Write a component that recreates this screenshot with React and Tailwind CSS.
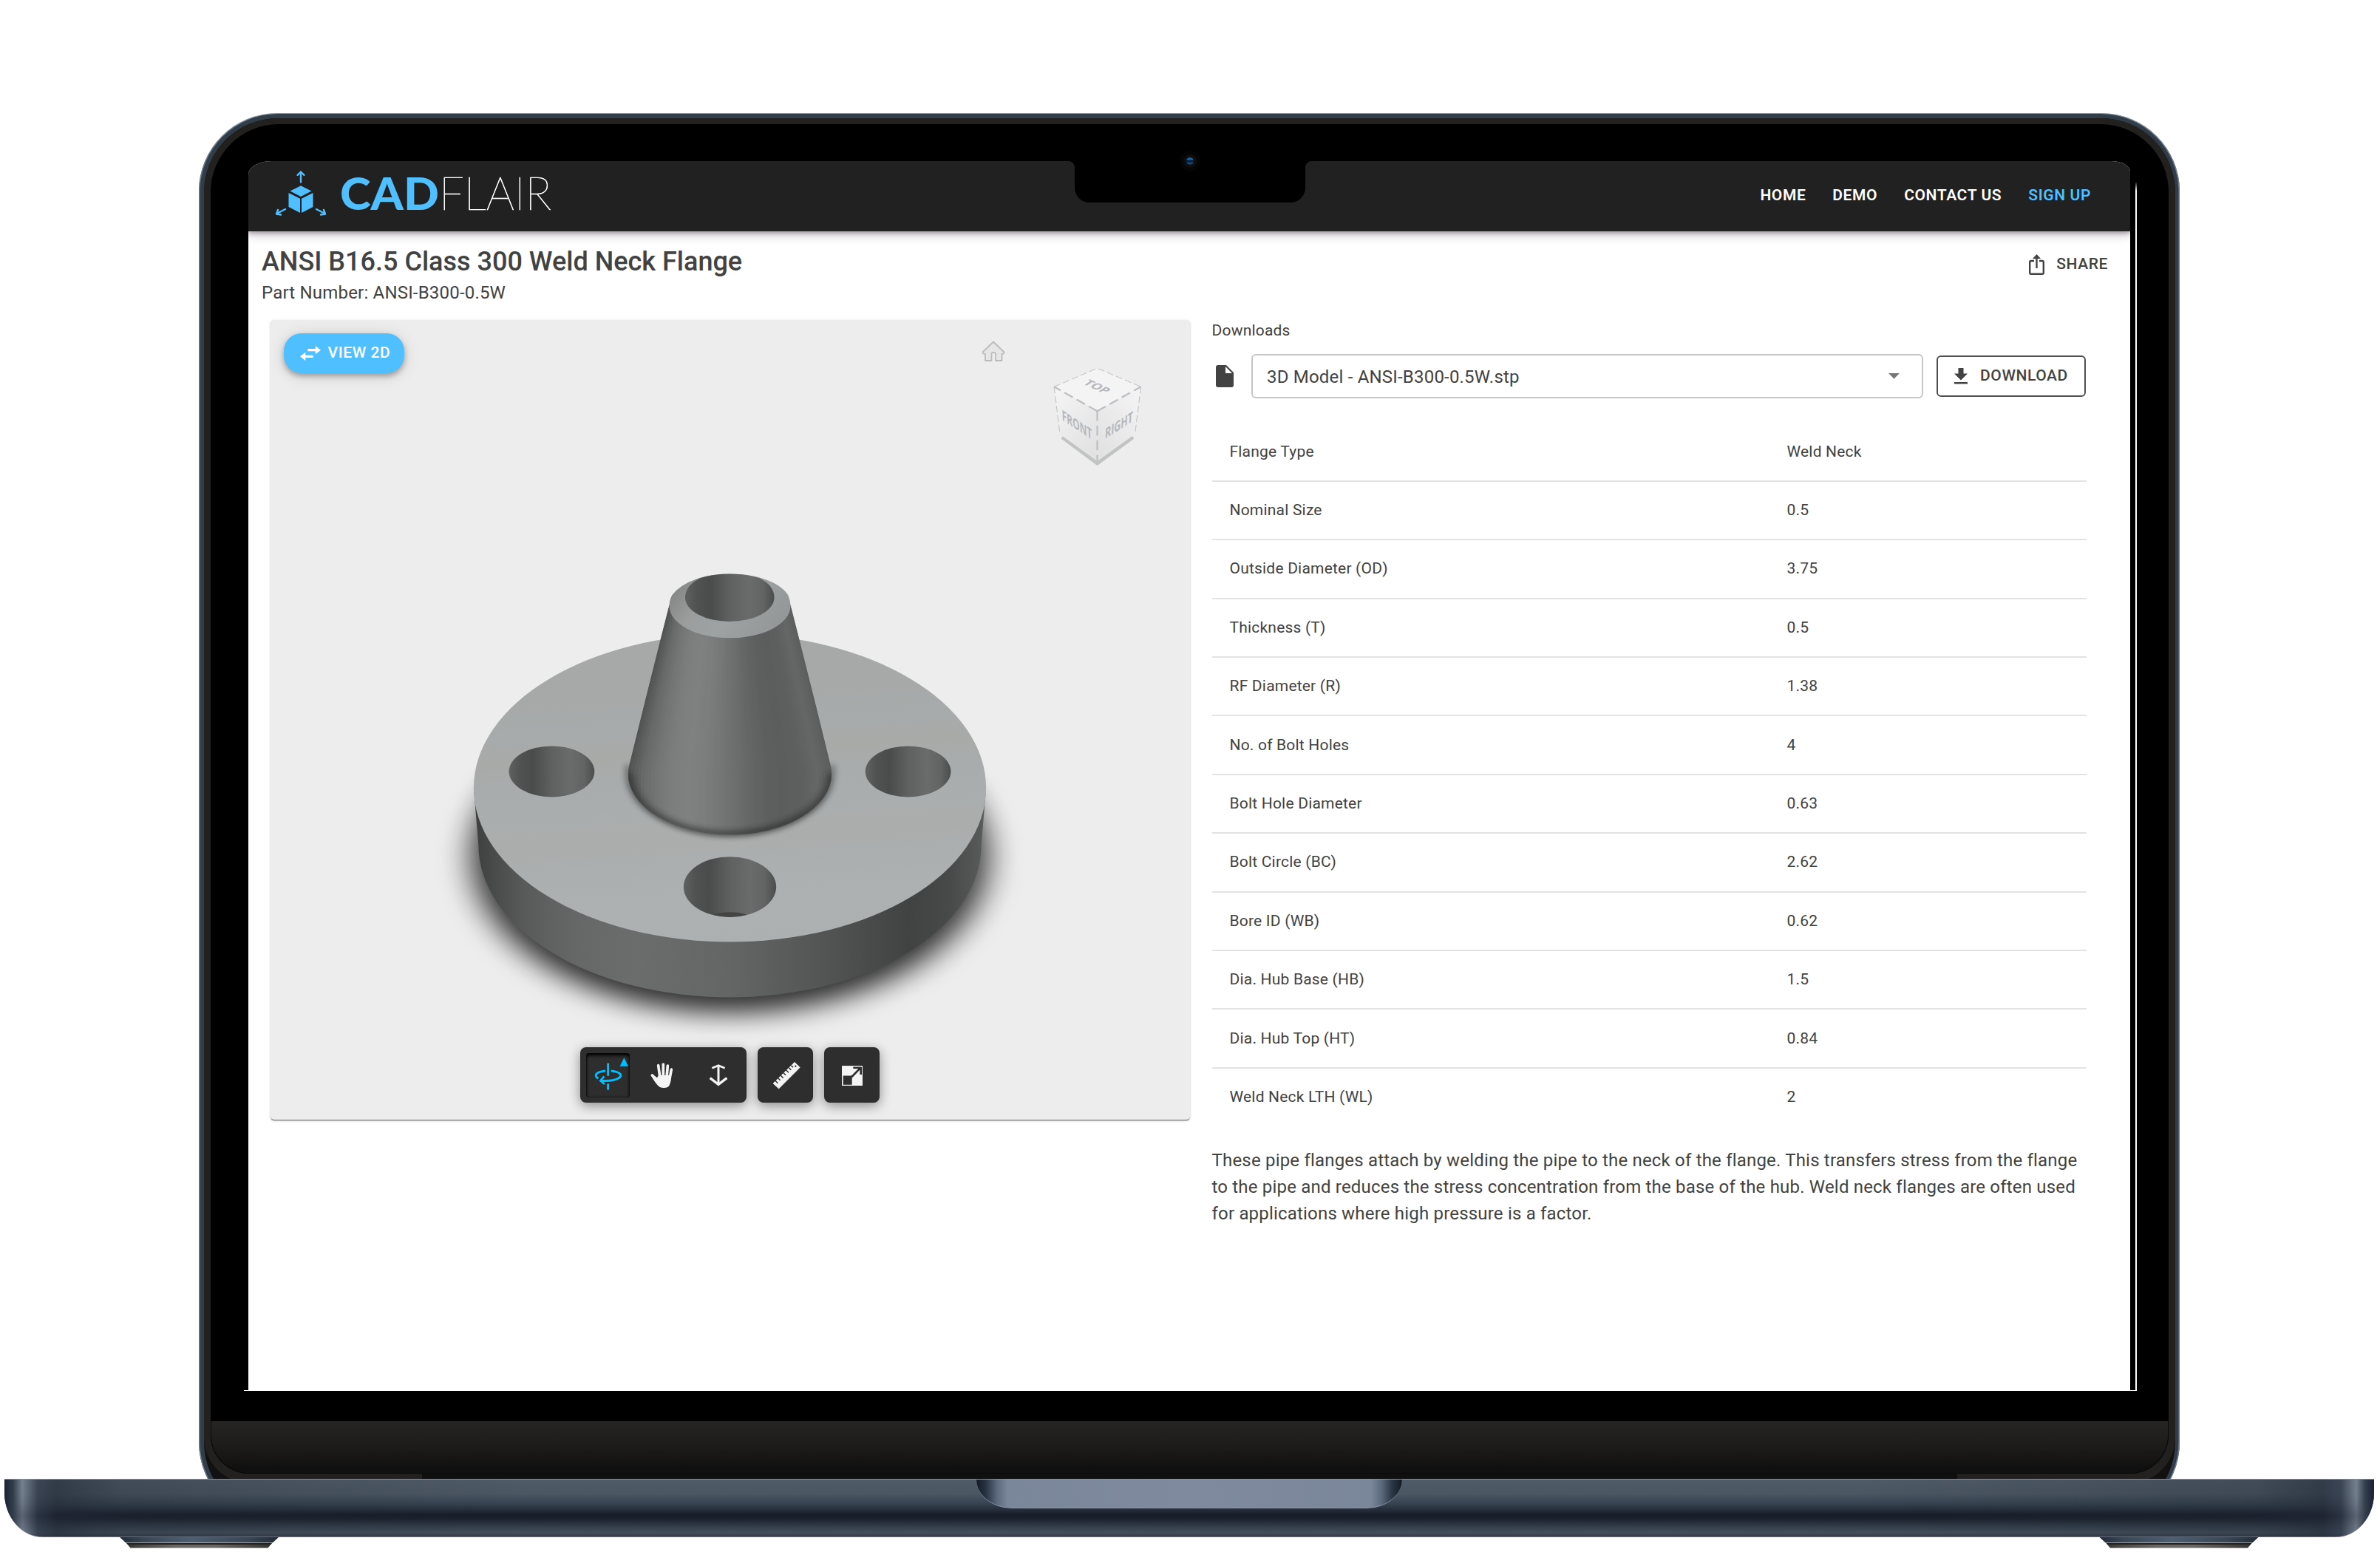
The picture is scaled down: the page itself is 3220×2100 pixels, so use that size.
const specs = [
  ["Flange Type", "Weld Neck"],
  ["Nominal Size", "0.5"],
  ["Outside Diameter (OD)", "3.75"],
  ["Thickness (T)", "0.5"],
  ["RF Diameter (R)", "1.38"],
  ["No. of Bolt Holes", "4"],
  ["Bolt Hole Diameter", "0.63"],
  ["Bolt Circle (BC)", "2.62"],
  ["Bore ID (WB)", "0.62"],
  ["Dia. Hub Base (HB)", "1.5"],
  ["Dia. Hub Top (HT)", "0.84"],
  ["Weld Neck LTH (WL)", "2"],
];

function Logo() {
  return (
    <svg viewBox="366 218 390 84" className="h-[84px] w-[390px] overflow-visible">
      <g fill="none" stroke="#50bfff" strokeWidth="2.4" strokeLinecap="round" strokeLinejoin="round">
        <path d="M407 245.500V231.500M402.600 235.800L407 231.500L411.400 235.800" />
        <path d="M386 282L374.500 288M376 283L374 288.500L380 289.500" />
        <path d="M428 282L439.500 288M438 283L440 288.500L434 289.500" />
      </g>
      <g fill="#50bfff">
        <path d="M407 250.300L421.500 257.600L407 264.900L392.500 257.600Z" />
        <path d="M390.500 260L406 267.800V287L390.500 279Z" />
        <path d="M423.500 260L408 267.800V287L423.500 279Z" />
      </g>
      <text x="460" y="282.500" textLength="134" lengthAdjust="spacingAndGlyphs" fontFamily="Lato" fontWeight="900" fontSize="61" fill="#50bfff">CAD</text>
      <text x="594" y="282.500" textLength="152" lengthAdjust="spacingAndGlyphs" fontFamily="Lato" fontWeight="100" fontSize="61.500" fill="#fff" stroke="#fff" strokeWidth=".7">FLAIR</text>
    </svg>
  );
}

const coneShades = [
  [80, 83, 82], [103, 106, 105], [117, 119, 118], [125, 127, 126], [127, 129, 128], [123, 125, 124], [116, 118, 117],
  [106, 109, 108], [98, 101, 100], [92, 95, 94], [91, 94, 93], [93, 96, 95], [101, 103, 102], [91, 94, 93],
];

/* Tapered strips that shade the hub along its length. */
const coneStrips = Array.from({ length: 60 }, (_, i) => {
  const a = i / 60;
  const b = Math.min(1, (i + 1) / 60 + 0.008);
  const t = ((i + 0.5) / 60) * 13;
  const k = Math.floor(t);
  const [r, g, bl] = coneShades[k].map((v, c) => Math.round(v + (coneShades[k + 1][c] - v) * (t - k)));
  return {
    d: `M${645 + 306 * a} 185L${538 + 520 * a} 725V950H${538 + 520 * b}V725L${645 + 306 * b} 185Z`,
    fill: `rgb(${r},${g},${bl})`,
  };
});

function Flange() {
  return (
    <svg viewBox="0 0 1568 1568" preserveAspectRatio="none" className="absolute top-[307px] left-[194px] h-[660px] w-[840px] overflow-visible">
      <defs>
        <linearGradient id="side">
          <stop offset="0" stopColor="#3c3f3e" /><stop offset=".03" stopColor="#454847" /><stop offset=".1" stopColor="#585b5a" /><stop offset=".2" stopColor="#666867" />
          <stop offset=".32" stopColor="#6b6d6c" /><stop offset=".5" stopColor="#636665" /><stop offset=".68" stopColor="#525554" />
          <stop offset=".85" stopColor="#404341" /><stop offset=".93" stopColor="#474a49" /><stop offset="1" stopColor="#5a5d5c" />
        </linearGradient>
        <linearGradient id="face" x1="0.400" y1="0" x2="0.500" y2="1">
          <stop offset="0" stopColor="#a6a9a8" /><stop offset=".2" stopColor="#a6a9a8" /><stop offset=".3" stopColor="#a7abab" />
          <stop offset=".38" stopColor="#a8aaa8" /><stop offset=".48" stopColor="#a8acad" /><stop offset=".6" stopColor="#abaeae" /><stop offset=".66" stopColor="#abadac" />
          <stop offset=".76" stopColor="#abafb0" /><stop offset=".88" stopColor="#aeb1b1" /><stop offset="1" stopColor="#adb0b0" />
        </linearGradient>
        <linearGradient id="bore">
          <stop offset="0" stopColor="#5e6160" /><stop offset=".13" stopColor="#4f5251" /><stop offset=".28" stopColor="#494c4b" />
          <stop offset=".5" stopColor="#5e6160" /><stop offset=".72" stopColor="#696c6b" /><stop offset=".88" stopColor="#616463" /><stop offset="1" stopColor="#4a4d4c" />
        </linearGradient>
        <linearGradient id="rim" x1="0" x2="1" y1=".1" y2=".5">
          <stop offset="0" stopColor="#7d807f" /><stop offset=".35" stopColor="#9c9e9e" /><stop offset=".6" stopColor="#9ea2a3" /><stop offset="1" stopColor="#959898" />
        </linearGradient>
        <filter id="soft" x="-30%" y="-30%" width="160%" height="160%"><feGaussianBlur stdDeviation="42 40" /></filter>
        <filter id="soft2" x="-30%" y="-60%" width="160%" height="220%"><feGaussianBlur stdDeviation="9" /></filter>
        <clipPath id="coneClip"><path d="M645 185L622 296L544 700Q541 715 541 730A257 196 0 0 0 1055 730Q1055 715 1051 695L975 296L951 185Z" /></clipPath>
        <clipPath id="hole"><ellipse cx="798" cy="1093" rx="117" ry="97" /></clipPath>
      </defs>
      <ellipse cx="798" cy="1000" rx="660" ry="510" fill="#000" opacity=".36" filter="url(#soft)" />
      <ellipse cx="798" cy="990" rx="632" ry="488" fill="#000" opacity=".75" filter="url(#soft)" />
      <path d="M151 775L163 958A635 490 0 0 0 1433 958L1445 775Z" fill="url(#side)" />
      <ellipse cx="798" cy="775" rx="647" ry="495" fill="url(#face)" />
      <ellipse cx="348" cy="722" rx="108" ry="82" fill="url(#bore)" />
      <ellipse cx="1248" cy="722" rx="108" ry="82" fill="url(#bore)" />
      <ellipse cx="798" cy="1093" rx="117" ry="97" fill="url(#bore)" />
      <ellipse cx="798" cy="1210" rx="66" ry="36" fill="#444443" clipPath="url(#hole)" />
      <path d="M541 700A257 204 0 0 0 1055 700L1055 730A257 198 0 0 1 541 730Z" fill="#000" stroke="#000" strokeWidth="10" opacity=".5" filter="url(#soft2)" />
      <g clipPath="url(#coneClip)">
        {coneStrips.map((s) => <path key={s.d} d={s.d} fill={s.fill} />)}
        <path d="M541 726A257 196 0 0 0 1055 726" fill="none" stroke="#1c1e1d" strokeWidth="20" opacity=".5" filter="url(#soft2)" />
      </g>
      <path d="M645 190Q645 172 652 155Q672 122 712 104Q750 87 798 87Q850 87 886 104Q928 122 945 155Q951 172 951 190A153 103 0 0 1 645 190Z" fill="url(#rim)" />
      <path d="M685 163Q685 125 722 101Q755 87 798 87Q842 87 874 101Q910 125 910 163A112.500 77 0 0 1 685 163Z" fill="url(#bore)" />
    </svg>
  );
}

function ViewCube() {
  return (
    <svg viewBox="1420 490 130 146" className="absolute top-[57px] left-[1054px] h-[146px] w-[130px] overflow-visible">
      <defs>
        <linearGradient id="cubeL" x1="0" y1="0" x2=".7" y2="1"><stop offset="0" stopColor="#f5f5f5" /><stop offset="1" stopColor="#e2e2e2" /></linearGradient>
        <linearGradient id="cubeR" x1="1" y1="0" x2=".3" y2="1"><stop offset="0" stopColor="#f5f5f5" /><stop offset="1" stopColor="#e2e2e2" /></linearGradient>
      </defs>
      <path d="M1437 591.500L1484.500 626.800L1533 591.500" fill="none" stroke="#c2c3c3" strokeWidth="5" />
      <path d="M1484.500 498.300L1543.600 523.300L1484.500 556.300L1426.200 523.300Z" fill="#f4f4f4" />
      <path d="M1426.200 523.300L1484.500 556.300V624L1434 587.500Z" fill="url(#cubeL)" />
      <path d="M1543.600 523.300L1484.500 556.300V624L1535.500 587.500Z" fill="url(#cubeR)" />
      <g fill="none" stroke="#bcbfc1" strokeWidth="2.200">
        <path d="M1484.500 556.300L1426.200 523.300M1484.500 556.300L1543.600 523.300" strokeDasharray="13 6" />
        <path d="M1484.500 556.300V624" strokeDasharray="13.500 6.200" />
        <path d="M1426.200 523.300L1484.500 498.300L1543.600 523.300M1426.200 523.300L1434 587.500M1543.600 523.300L1535.500 587.500" strokeWidth="1" strokeDasharray="9 4" />
      </g>
      <g fill="#b5b8bb" fontFamily="Open Sans" fontWeight="700" textAnchor="middle">
        <text transform="matrix(.87 .4 -.75 .5 1484.500 523)" y="6.500" fontSize="17.500">TOP</text>
        <text transform="matrix(.85 .56 .05 1 1457 574.500)" y="7" fontSize="19.500" textLength="48" lengthAdjust="spacingAndGlyphs">FRONT</text>
        <text transform="matrix(.82 -.52 -.05 1 1514 575)" y="7" fontSize="19.500" textLength="46" lengthAdjust="spacingAndGlyphs">RIGHT</text>
      </g>
    </svg>
  );
}

const tool = "rounded-[8px] bg-[#2e2e2e] shadow-[0_4px_16px_rgba(0,0,0,0.42)] h-[75px] flex";

function Toolbar() {
  return (
    <div className="absolute top-[983.500px] left-[419.300px] flex gap-[15px]">
      <div className={tool + " w-[225px]"}>
        <div className="m-[8px] h-[60px] w-[59px] rounded-[4px] shadow-[inset_0_3px_4px_#000,inset_0_0_3px_rgba(0,0,0,0.7)]">
          <svg viewBox="99 102 177 180" className="h-[60px] w-[59px]">
            <g fill="none" stroke="#00bfff" strokeWidth="9">
              <path d="M188 143V194" /><path d="M188 226V251" />
              <path d="M148 205C128 192 140 178 177 174" />
              <path d="M200 174C238 178 250 192 230 204C218 211 195 216 160 214" />
              <path d="M172 196L157 214L174 228" strokeWidth="8" />
            </g>
            <path d="M236 155L253 121L270 155Z" fill="#00bfff" />
          </svg>
        </div>
        <svg viewBox="340 135 150 120" className="mt-[18.500px] ml-[13px] h-[40px] w-[50px]">
          <g stroke="#f4f4f4" strokeLinecap="round" strokeWidth="11" fill="none">
            <path d="M393 155L400 205" /><path d="M413 150V205" /><path d="M431 156L427 205" /><path d="M446 171L438 215" /><path d="M368 195L390 217" />
          </g>
          <path d="M394 195H441L444 212Q442 232 433 242Q416 250 399 243Q388 236 374 214L366 200L372 193L388 205Z" fill="#f4f4f4" />
        </svg>
        <svg viewBox="577 135 120 120" className="mt-[18.500px] ml-[29px] h-[40px] w-[40px]">
          <g fill="none" stroke="#f4f4f4" strokeWidth="10">
            <path d="M637 153V232" strokeWidth="9" /><path d="M611 166L637 155L663 166" strokeWidth="8" /><path d="M603 206L637 232L671 206" />
          </g>
        </svg>
      </div>
      <div className={tool + " w-[75px] items-center justify-center"}>
        <svg viewBox="850 137 126 116" className="mt-[2px] ml-[2px] h-[38.700px] w-[42px]">
          <path d="M859 227L946 141L968 162L882 248Z" fill="#f4f4f4" strokeLinejoin="round" stroke="#f4f4f4" strokeWidth="2" />
          <g stroke="#2e2e2e" strokeWidth="4.500">
            <path d="M868 216L878 226M879 205L888 214M890 195L900 205M901 184L910 193M912 173L922 183M923 163L932 172M932 154L940 162" />
          </g>
          <circle cx="950" cy="157" r="3.500" fill="#2e2e2e" />
        </svg>
      </div>
      <div className={tool + " w-[75px] items-center justify-center"}>
        <svg viewBox="1134 156 84 82" className="mt-[3px] h-[27.500px] w-[28px]">
          <path d="M1134 156H1218V238H1134Z" fill="#f4f4f4" />
          <path d="M1141 198H1173V231H1141Z" fill="#2e2e2e" stroke="#2e2e2e" strokeWidth="4" />
          <path d="M1172 203L1208 166M1180 164H1211M1211 161V192" stroke="#2e2e2e" strokeWidth="8" fill="none" />
        </svg>
      </div>
    </div>
  );
}

function Viewer() {
  return (
    <div className="relative h-[1081.500px] w-[1244px] rounded-[5px] bg-[#ededed] shadow-[0_2px_1px_-1px_rgba(0,0,0,0.35),0_1.500px_1.500px_rgba(0,0,0,0.2),0_1px_4px_rgba(0,0,0,0.12)]">
      <div className="absolute inset-0 overflow-hidden rounded-[5px]">
        <Flange />
      </div>
      <button className="absolute top-[17.500px] left-[18px] flex h-[54px] w-[163px] items-center rounded-[24px] bg-[#50bfff] pl-[22px] shadow-[0_4px_7px_rgba(0,0,0,0.28),0_3px_22px_rgba(0,0,0,0.14)]">
        <svg viewBox="0 0 54 60" preserveAspectRatio="none" className="h-[20px] w-[28px] fill-white">
          <path d="M20 12H40V0L54 17L40 34V22H20ZM34 38H14V26L0 43L14 60V48H34Z" />
        </svg>
        <span className="ml-[9.500px] pb-[2px] text-[21px] leading-[36px] font-medium tracking-[0.600px] text-white">VIEW 2D</span>
      </button>
      <svg viewBox="0 0 32 29" className="absolute top-[28px] left-[961.500px] h-[29px] w-[32px]" fill="#e6e6e6" stroke="#bbb" strokeWidth="1.800" strokeLinejoin="round">
        <path d="M16 1.500L30.500 15.500Q31 18 27.500 18V27H19V17Q16 14.500 13.500 17V27H5V18Q1 18 1.500 15.500Z" />
      </svg>
      <ViewCube />
      <Toolbar />
    </div>
  );
}

function Screen() {
  return (
    <div className="flex h-[1664px] w-[2546px] shrink-0 flex-col overflow-hidden rounded-tl-[32px_18px] rounded-tr-[26px_14px] bg-white text-[#424242]">
      <header className="relative z-10 flex h-[95px] shrink-0 items-center justify-between bg-[#212121] pr-[53px] pl-[30px] shadow-[0_3px_6px_rgba(40,20,40,0.35),0_6px_14px_rgba(40,20,40,0.16)]">
        <div className="pb-[10px]"><Logo /></div>
        <nav className="flex gap-[36px] pb-[3px] text-[21px] leading-[36px] font-semibold tracking-[0.600px] text-white">
          <span>HOME</span><span>DEMO</span><span>CONTACT US</span><span className="text-[#50bfff]">SIGN UP</span>
        </nav>
      </header>
      <div className="flex justify-between pt-[20px] pr-[30px] pl-[18px]">
        <div>
          <h1 className="w-fit text-[36px] leading-[43px] font-medium">ANSI B16.5 Class 300 Weld Neck Flange</h1>
          <p className="mt-[2px] w-fit text-[24px] leading-[36px] tracking-[0.190px]">Part Number: ANSI-B300-0.5W</p>
        </div>
        <div className="mt-[6px] flex h-[36px] items-start">
          <svg viewBox="0 0 21 28" className="mt-[5px] h-[28px] w-[21px]" fill="none" stroke="#424242" strokeWidth="2.400">
            <path d="M7 9H3Q1.200 9 1.200 11V25Q1.200 26.800 3 26.800H18Q19.800 26.800 19.800 25V11Q19.800 9 18 9H14" />
            <path d="M10.500 19V3" /><path d="M10.500 0L16 6H5Z" fill="#424242" stroke="none" />
          </svg>
          <span className="ml-[16px] text-[21px] leading-[36px] font-medium tracking-[0.600px]">SHARE</span>
        </div>
      </div>
      <div className="flex gap-[29.500px] pt-[19px] pl-[30px]">
        <Viewer />
        <section className="w-[1183px]">
          <p className="w-fit text-[21px] leading-[28px] tracking-[0.200px]">Downloads</p>
          <div className="mt-[18px] flex h-[60px] items-center">
            <svg viewBox="0 0 24 30" className="ml-[5.500px] h-[30px] w-[24px] shrink-0 fill-[#424242]">
              <path d="M3 0H14L24 10V27Q24 30 21 30H3Q0 30 0 27V3Q0 0 3 0ZM13 2V11H22Z" fillRule="evenodd" />
            </svg>
            <div className="ml-[24px] flex h-[60px] w-[908.500px] items-center justify-between rounded-[6px] border-2 border-[#c6c6c6] pr-[30px] pl-[19px]">
              <span className="pt-[2px] text-[24px] leading-[36px] tracking-[0.200px]">3D Model - ANSI-B300-0.5W.stp</span>
              <svg viewBox="0 0 15 7.500" className="h-[7.500px] w-[15px] fill-[#757575]"><path d="M0 0H15L7.500 7.500Z" /></svg>
            </div>
            <button className="ml-[18.500px] flex h-[56px] w-[202px] items-center rounded-[6px] border-2 border-[#505050] pl-[22px]">
              <svg viewBox="0 0 18 21.500" className="h-[21.500px] w-[18px] fill-[#424242]"><path d="M5.500 0H12.500V7.500H18L9 16.500L0 7.500H5.500ZM0 19H18V21.500H0Z" /></svg>
              <span className="ml-[17px] pb-[3px] text-[21px] leading-[36px] font-medium tracking-[0.600px]">DOWNLOAD</span>
            </button>
          </div>
          <div className="mt-[33.500px]">
            {specs.map(([name, value]) => (
              <div key={name} className="grid h-[79.400px] grid-cols-[754px_1fr] items-center border-b-2 border-[#e3e3e3] pb-[1px] pl-[24px] text-[21px] leading-[30px] tracking-[0.200px] last:border-transparent">
                <span>{name}</span>
                <span>{value}</span>
              </div>
            ))}
          </div>
          <p className="mt-[26.500px] text-[24px] leading-[36px] tracking-[0.190px] whitespace-nowrap">
            These pipe flanges attach by welding the pipe to the neck of the flange. This transfers stress from the flange<br />
            to the pipe and reduces the stress concentration from the base of the hub. Weld neck flanges are often used<br />
            for applications where high pressure is a factor.
          </p>
        </section>
      </div>
    </div>
  );
}

function Notch() {
  return (
    <div className="absolute top-[50px] left-[1161.500px] z-20 flex h-[56px] w-[328px]">
      <div className="size-[8px] bg-[radial-gradient(circle_at_0_100%,transparent_7.500px,black_8px)]" />
      <div className="flex-1 rounded-b-[20px] bg-black" />
      <div className="size-[8px] bg-[radial-gradient(circle_at_100%_100%,transparent_7.500px,black_8px)]" />
      <div className="absolute -top-[14px] left-[149.500px] flex size-[28px] items-center justify-center rounded-full bg-[#050505]">
        <div className="flex size-[18px] items-center justify-center rounded-full bg-[#0e0e0f]">
          <div className="size-[10px] rounded-full bg-[linear-gradient(#16508c_0%,#1d66ad_25%,#071d38_45%,#071d38_58%,#15508c_78%,#0c2c50_100%)]" />
        </div>
      </div>
    </div>
  );
}

function Lid() {
  return (
    <div className="ml-[268.500px] h-[1848px] w-[2680px] overflow-hidden">
      <div className="h-[1908px] rounded-t-[106px] rounded-b-[110px] border-t border-[#8c98a2] bg-[#323d4a] p-[6px] pl-[7px] shadow-[inset_1.500px_0_0_#6d7a88,inset_-1.500px_0_0_#6d7a88]">
        <div className="h-full overflow-hidden rounded-t-[100px] rounded-b-[104px] bg-[#111]">
          <div className="flex h-[1847px] flex-col rounded-t-[100px] rounded-b-[62px] bg-[#22211f] px-[9px] pt-[8px]">
            <div className="relative flex h-[1826px] shrink-0 flex-col overflow-hidden rounded-t-[92px] rounded-b-[52px] bg-black">
              <div className="mt-[50px] mb-[41px] ml-[51.500px]"><Screen /></div>
              <div className="h-[71px] shrink-0 rounded-b-[52px] border-x border-b border-[#0a0a0a] bg-[linear-gradient(#262523,#1b1a18_55%,#101010_90%)]" />
              <div className="absolute top-[78px] left-[2604.500px] h-[1636px] w-[1.500px] bg-[linear-gradient(transparent,white_12px)]" />
              <div className="absolute top-[1713px] left-[45.500px] h-px w-[2560px] bg-white" />
              <Notch />
            </div>
            <div className="mx-[286px] h-[15px] bg-[#101010]" />
          </div>
        </div>
      </div>
    </div>
  );
}

function Foot() {
  return (
    <div className="flex w-[216px] flex-col items-center">
      <div className="h-[8px] w-full bg-[linear-gradient(to_right,#232b38,#3a4654_15%,#4f5f70_45%,#3a4654_80%,#232b38)] [clip-path:polygon(0_0,100%_0,96%_100%,4%_100%)]" />
      <div className="h-[7px] w-[198px] border-t-2 border-[#222] bg-[linear-gradient(to_right,#333,#4a4846_10%,#6a6765_35%,#6a6765_60%,#4a4846_85%,#333)] [clip-path:polygon(0_0,100%_0,97%_100%,3%_100%)]" />
    </div>
  );
}

function Base() {
  return (
    <div className="mr-[8px] ml-[5.500px]">
      <div className="h-[78.500px] overflow-hidden rounded-b-[52px_60px] border-t border-b border-t-[#8b919a] border-b-[#6f6d7c] bg-[linear-gradient(#4f5b67,#4a5662_25%,#36424f_43%,#171c28_62%,#1a202c_68%,#35404c_84%,#434f5b_93%,#363c49_100%)]">
        <div className="flex h-full justify-center bg-[linear-gradient(to_right,#1a2230_0,#333e4c_12px,rgba(150,160,178,0.55)_24px,rgba(50,60,76,0.7)_45px,rgba(34,40,54,0.62)_70px,rgba(34,42,54,0.3)_160px,transparent_700px,transparent_2506px,rgba(34,42,54,0.3)_3046px,rgba(34,40,54,0.62)_3136px,rgba(50,60,76,0.7)_3161px,rgba(150,160,178,0.55)_3182px,#333e4c_3194px,#1a2230_3206px)]">
          <div className="h-[39px] w-[576px] rounded-b-[48px_39px] border-b border-[#8a95a8] bg-[linear-gradient(to_right,#131a24,#2c3746_14px,#5c6a7d_28px,#7a8699_42px,#7f8a9e_50%,#7a8699_534px,#5c6a7d_548px,#2c3746_562px,#131a24)]" />
        </div>
      </div>
      <div className="flex justify-between px-[156px]"><Foot /><Foot /></div>
    </div>
  );
}

export default function App() {
  return (
    <div className="h-[2100px] w-[3220px] overflow-hidden bg-white pt-[153px] font-['Roboto',sans-serif]">
      <Lid />
      <Base />
    </div>
  );
}
